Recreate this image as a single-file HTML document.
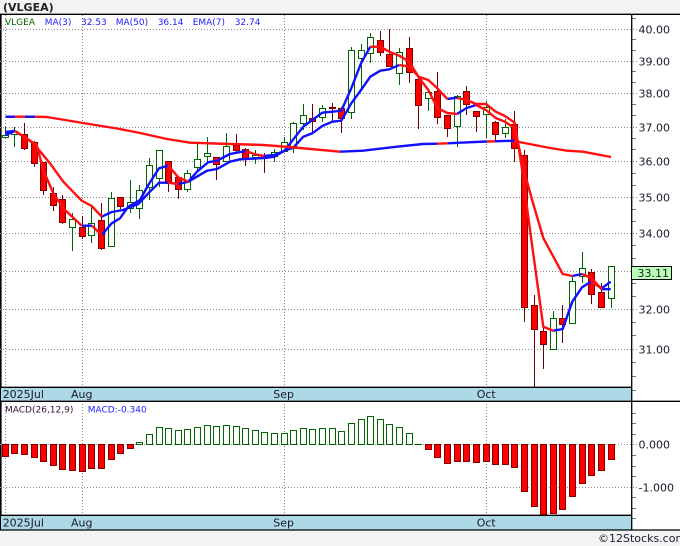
<!DOCTYPE html>
<html><head><meta charset="utf-8"><style>
html,body{margin:0;padding:0;background:#f3f3f3}
svg{display:block}
text{font-family:"DejaVu Sans",sans-serif;white-space:pre}
</style></head><body>
<svg xmlns="http://www.w3.org/2000/svg" width="680" height="546" viewBox="0 0 680 546">
<rect width="680" height="546" fill="#f3f3f3"/>
<rect x="0" y="14" width="680" height="516" fill="#fff"/>
<rect x="1" y="387" width="631" height="14" fill="#add8e6"/>
<rect x="1" y="515" width="631" height="15" fill="#add8e6"/>
<path d="M.8 14V530" stroke="#000" stroke-width="1.6" fill="none"/>
<path d="M0 29.5H637M0 61.5H637M0 93.5H637M0 127.5H637M0 161.5H637M0 197.5H637M0 233.5H637M0 271.5H637M0 309.5H637M0 349.5H637M0 444.5H637M0 487.5H637" stroke="#888" stroke-dasharray="1 2" fill="none"/>
<path d="M5.5 15V387M82.5 15V387M284.5 15V387M486.5 15V387M5.5 401V515M82.5 401V515M284.5 401V515M486.5 401V515" stroke="#888" stroke-dasharray="1 2" fill="none"/>
<path d="M632 18.5h4M632 39.5h4M632 50.5h4M632 71.5h4M632 82.5h4M632 104.5h4M632 115.5h4M632 138.5h4M632 149.5h4M632 173.5h4M632 185.5h4M632 209.5h4M632 221.5h4M632 245.5h4M632 258.5h4M632 283.5h4M632 296.5h4M632 322.5h4M632 335.5h4M632 362.5h4M632 376.5h4M632 390.5h4M632 413.5h4M632 423.5h4M632 434.5h4M632 455.5h4M632 466.5h4M632 476.5h4M632 497.5h4M632 508.5h4M632 518.5h4" stroke="#777" fill="none"/>

<!-- green wicks -->
<path fill="none" stroke="#006400" d="M5.5 127V138M14.5 127V147M72.5 213V251M91.5 207V243M111.5 192V246M130.5 180V213M139.5 185V219M149.5 158V200M159.5 150V187M187.5 170V192M197.5 144V171M207.5 137V163M226.5 133V161M255.5 150V164M274.5 149V162M284.5 137V151M293.5 122V153M303.5 104V130M322.5 105V122M351.5 47V119M361.5 44V90M370.5 33V63M399.5 48V85M428.5 92V111M457.5 95V147M486.5 101V138M505.5 119V138M553.5 311V349M572.5 277V323M582.5 252V283M611.5 266V308"/>
<!-- red wicks -->
<path fill="none" stroke="#700000" d="M24.5 123V150M34.5 141V167M43.5 162V195M53.5 187V211M62.5 195V224M82.5 216V239M101.5 203V250M120.5 197V209M168.5 161V192M178.5 177V199M216.5 157V180M236.5 134V153M245.5 148V166M264.5 153V173M312.5 104V132M332.5 103V122M341.5 107V133M380.5 31V56M389.5 29V66M409.5 37V83M418.5 77V129M437.5 72V124M447.5 115V137M466.5 86V115M476.5 111V132M495.5 121V142M514.5 111V162M524.5 150V322M534.5 295V387M543.5 327V369M562.5 305V343M591.5 269V304M601.5 283V308"/>
<!-- green bodies -->
<g fill="#fff" stroke="#006400">
<rect x="2.5" y="135.5" width="6" height="2"/><rect x="11.5" y="131.5" width="6" height="3"/><rect x="69.5" y="219.5" width="6" height="8"/><rect x="88.5" y="223.5" width="6" height="12"/><rect x="108.5" y="198.5" width="6" height="48"/><rect x="127.5" y="202.5" width="6" height="6"/><rect x="136.5" y="190.5" width="6" height="18"/><rect x="146.5" y="165.5" width="6" height="22"/><rect x="156.5" y="150.5" width="6" height="28"/><rect x="184.5" y="173.5" width="6" height="16"/><rect x="194.5" y="159.5" width="6" height="8"/><rect x="204.5" y="153.5" width="6" height="3"/><rect x="223.5" y="146.5" width="6" height="15"/><rect x="252.5" y="155.5" width="6" height="2"/><rect x="271.5" y="152.5" width="6" height="4"/><rect x="281.5" y="142.5" width="6" height="9"/><rect x="290.5" y="123.5" width="6" height="25"/><rect x="300.5" y="115.5" width="6" height="8"/><rect x="319.5" y="108.5" width="6" height="9"/><rect x="348.5" y="50.5" width="6" height="62"/><rect x="358.5" y="50.5" width="6" height="8"/><rect x="367.5" y="37.5" width="6" height="16"/><rect x="396.5" y="52.5" width="6" height="21"/><rect x="425.5" y="92.5" width="6" height="6"/><rect x="454.5" y="96.5" width="6" height="30"/><rect x="483.5" y="107.5" width="6" height="7"/><rect x="502.5" y="127.5" width="6" height="6"/><rect x="550.5" y="318.5" width="6" height="31"/><rect x="569.5" y="281.5" width="6" height="42"/><rect x="579.5" y="268.5" width="6" height="8"/><rect x="608.5" y="266.5" width="6" height="32"/>
</g>
<!-- red bodies -->
<g fill="#f00" stroke="#800000">
<rect x="21.5" y="134.5" width="6" height="14"/><rect x="31.5" y="142.5" width="6" height="21"/><rect x="40.5" y="162.5" width="6" height="28"/><rect x="50.5" y="193.5" width="6" height="12"/><rect x="59.5" y="199.5" width="6" height="23"/><rect x="79.5" y="227.5" width="6" height="9"/><rect x="98.5" y="220.5" width="6" height="28"/><rect x="117.5" y="197.5" width="6" height="9"/><rect x="165.5" y="161.5" width="6" height="22"/><rect x="175.5" y="177.5" width="6" height="12"/><rect x="213.5" y="157.5" width="6" height="7"/><rect x="233.5" y="145.5" width="6" height="5"/><rect x="242.5" y="149.5" width="6" height="9"/><rect x="261.5" y="155.5" width="6" height="2"/><rect x="309.5" y="118.5" width="6" height="3"/><rect x="329.5" y="107.5" width="6" height="1"/><rect x="338.5" y="108.5" width="6" height="10"/><rect x="377.5" y="40.5" width="6" height="12"/><rect x="386.5" y="54.5" width="6" height="12"/><rect x="406.5" y="48.5" width="6" height="24"/><rect x="415.5" y="79.5" width="6" height="26"/><rect x="434.5" y="91.5" width="6" height="26"/><rect x="444.5" y="115.5" width="6" height="13"/><rect x="463.5" y="91.5" width="6" height="13"/><rect x="473.5" y="111.5" width="6" height="5"/><rect x="492.5" y="122.5" width="6" height="12"/><rect x="511.5" y="124.5" width="6" height="24"/><rect x="521.5" y="155.5" width="6" height="152"/><rect x="531.5" y="305.5" width="6" height="24"/><rect x="540.5" y="331.5" width="6" height="13"/><rect x="559.5" y="318.5" width="6" height="6"/><rect x="588.5" y="272.5" width="6" height="22"/><rect x="598.5" y="292.5" width="6" height="15"/>
</g>

<!-- moving averages -->
<g fill="none" stroke-width="2.4" stroke-linejoin="round" stroke-linecap="butt">
<g stroke="#1010ff">
<polyline points="5.5,135 15,131"/>
<polyline points="82,225.7 92,225.7"/>
<polyline points="101.7,235 111.7,223.3 120,218.3 128.3,206.7 140,200 148.3,185 159,168.3 168.3,165.7"/>
<polyline points="188.3,181.7 197,171.7 208,162.3 217,160.7 230,154 236.7,152.7 246,151"/>
<polyline points="264.3,156 274.3,155 284.3,151 293.3,139.3 303.3,126.7 312.3,120 322.3,112.7 332.3,111.7 341.3,110.7 351.3,88.3 361,63.3 370.3,46.7"/>
<polyline points="457,114 466.7,108 476,105"/>
<polyline points="553.3,330.7 562.7,329 572.3,301.7 582,287.3 591,281.7"/>
<polyline points="601.7,288.3 610.7,281.7"/>
<polyline points="5.5,132 15,131"/>
<polyline points="101.7,216.7 111.7,212 123,210 138.3,204 148.3,193.3 159,182.7 168.3,182.7"/>
<polyline points="178.3,184 188.3,181.7 207,170.7 217,169 230,161.7 240,159.3 264.3,158 274.3,156.7 284.3,150.7 293.3,147.7 303.3,136.7 312.3,133.3 322.3,126 332.3,121.7 341.3,120.7 351.3,103.3 361,90 370.3,76.7 380.3,70.7 389.3,69.3 399.3,65"/>
<polyline points="447.3,99 457,97.7"/>
<polyline points="572.3,276 582,274"/>
<polyline points="601.7,289.3 610.7,289"/>
</g>
<g stroke="#ff0f0f">
<polyline points="15,131 24.5,137 36.7,145 43.3,170 53.3,193.3 63.3,208.3 81.7,225.7"/>
<polyline points="92,225.7 101.7,235"/>
<polyline points="168.3,165.7 178.3,177.3 188.3,181.7"/>
<polyline points="246,151 255,154.3 264.3,156"/>
<polyline points="370.3,46.7 380.3,46.7 389.3,51.7 399.3,55.7 409.3,61.7 418.7,77.3 428.3,90 437.3,108 447.3,113 457,114"/>
<polyline points="476,105 486,110 495.7,118 505,121.7 514.7,128.3 518,143 521.7,167 530,230 543.3,326.7 553.3,330.7"/>
<polyline points="591,281.7 601.7,288.3"/>
<polyline points="15,131 33.3,143.3 50,163.3 63.3,181.7 81.7,200.7 91.7,206 101.7,216.7"/>
<polyline points="168.3,182.7 178.3,184"/>
<polyline points="399.3,65 409.3,66.7 418.7,76.7 428.3,80 437.3,88.3 447.3,99"/>
<polyline points="457,98 466.7,100 476,104 486,104 495.7,111.7 505,116 514.7,122.7 518,143 524.7,173 533,203 543.3,238 562.7,274 572.3,276"/>
<polyline points="582,274 591.7,278.3 601.7,289.3"/>
</g>
<polyline stroke="#ff0f0f" points="5.5,116.7 33,116.7 47,117 83,123 117,128.5 140,133 167,139 190,142.7 230,144 263,145 289,147 340,151.7"/>
<polyline stroke="#1010ff" points="5.5,116.7 15,116.7"/>
<polyline stroke="#1010ff" points="25,116.7 35,116.7"/>
<polyline stroke="#1010ff" points="340,151.7 363,150.7 397,146.7 423,144 437,143.7"/>
<polyline stroke="#ff0f0f" points="437,143.7 448,143.3"/>
<polyline stroke="#1010ff" points="448,143.3 460,142.7 487,141.5"/>
<polyline stroke="#ff0f0f" points="487,141.5 495,141.3"/>
<polyline stroke="#1010ff" points="495,141.3 514,140.7"/>
<polyline stroke="#ff0f0f" points="514,141 550,148 567,150.7 583,151.7 611,157"/>
</g>

<!-- MACD green -->
<g fill="#fff" stroke="#006400">
<rect x="136.5" y="442.5" width="6" height="2"/><rect x="146.5" y="434.5" width="6" height="10"/><rect x="156.5" y="427.5" width="6" height="17"/><rect x="165.5" y="428.5" width="6" height="16"/><rect x="175.5" y="430.5" width="6" height="14"/><rect x="184.5" y="429.5" width="6" height="15"/><rect x="194.5" y="427.5" width="6" height="17"/><rect x="204.5" y="425.5" width="6" height="19"/><rect x="213.5" y="426.5" width="6" height="18"/><rect x="223.5" y="425.5" width="6" height="19"/><rect x="233.5" y="426.5" width="6" height="18"/><rect x="242.5" y="428.5" width="6" height="16"/><rect x="252.5" y="430.5" width="6" height="14"/><rect x="261.5" y="432.5" width="6" height="12"/><rect x="271.5" y="433.5" width="6" height="11"/><rect x="281.5" y="433.5" width="6" height="11"/><rect x="290.5" y="430.5" width="6" height="14"/><rect x="300.5" y="428.5" width="6" height="16"/><rect x="309.5" y="429.5" width="6" height="15"/><rect x="319.5" y="428.5" width="6" height="16"/><rect x="329.5" y="428.5" width="6" height="16"/><rect x="338.5" y="431.5" width="6" height="13"/><rect x="348.5" y="423.5" width="6" height="21"/><rect x="358.5" y="419.5" width="6" height="25"/><rect x="367.5" y="416.5" width="6" height="28"/><rect x="377.5" y="419.5" width="6" height="25"/><rect x="386.5" y="424.5" width="6" height="20"/><rect x="396.5" y="427.5" width="6" height="17"/><rect x="406.5" y="433.5" width="6" height="11"/>
<path d="M415 444.5h7" fill="none"/>
</g>
<!-- MACD red -->
<g fill="#f00" stroke="#800000">
<rect x="2.5" y="444.5" width="6" height="12"/><rect x="11.5" y="444.5" width="6" height="9"/><rect x="21.5" y="444.5" width="6" height="10"/><rect x="31.5" y="444.5" width="6" height="13"/><rect x="40.5" y="444.5" width="6" height="17"/><rect x="50.5" y="444.5" width="6" height="21"/><rect x="59.5" y="444.5" width="6" height="25"/><rect x="69.5" y="444.5" width="6" height="26"/><rect x="79.5" y="444.5" width="6" height="27"/><rect x="88.5" y="444.5" width="6" height="24"/><rect x="98.5" y="444.5" width="6" height="24"/><rect x="108.5" y="444.5" width="6" height="15"/><rect x="117.5" y="444.5" width="6" height="9"/><rect x="127.5" y="444.5" width="6" height="4"/>
<rect x="425.5" y="444.5" width="6" height="5"/><rect x="434.5" y="444.5" width="6" height="13"/><rect x="444.5" y="444.5" width="6" height="19"/><rect x="454.5" y="444.5" width="6" height="17"/><rect x="463.5" y="444.5" width="6" height="17"/><rect x="473.5" y="444.5" width="6" height="18"/><rect x="483.5" y="444.5" width="6" height="17"/><rect x="492.5" y="444.5" width="6" height="20"/><rect x="502.5" y="444.5" width="6" height="20"/><rect x="511.5" y="444.5" width="6" height="23"/><rect x="521.5" y="444.5" width="6" height="47"/><rect x="531.5" y="444.5" width="6" height="62"/><rect x="540.5" y="444.5" width="6" height="72"/><rect x="550.5" y="444.5" width="6" height="69"/><rect x="559.5" y="444.5" width="6" height="65"/><rect x="569.5" y="444.5" width="6" height="52"/><rect x="579.5" y="444.5" width="6" height="39"/><rect x="588.5" y="444.5" width="6" height="31"/><rect x="598.5" y="444.5" width="6" height="26"/><rect x="608.5" y="444.5" width="6" height="15"/>
</g>

<!-- bands and frame -->
<rect x="1" y="387" width="631" height="14" fill="#add8e6"/>
<rect x="1" y="515" width="631" height="15" fill="#add8e6"/>
<path d="M0 14.3H680M0 387.3H632M0 401.3H680M0 515.3H632M0 530H680" stroke="#000" stroke-width="1.3" fill="none"/>
<path d="M631.7 14V530" stroke="#000" stroke-width="1.3" fill="none"/>
<path d="M534.5 372V387" stroke="#700000" fill="none"/>

<rect x="631.5" y="266.5" width="40" height="13" fill="#b8ffb8" stroke="#000"/>
<text x="637.5" y="277" font-size="11" fill="#222">33.11</text>

<text x="3" y="11" font-size="11" font-weight="bold" fill="#222">(VLGEA)</text>
<g font-size="9">
<text x="5" y="25" fill="#006400">VLGEA</text>
<text x="44.7" y="25" fill="#2020ff">MA(3)</text>
<text x="81" y="25" fill="#2020ff">32.53</text>
<text x="115.7" y="25" fill="#2020ff">MA(50)</text>
<text x="157.7" y="25" fill="#2020ff">36.14</text>
<text x="192.7" y="25" fill="#2020ff">EMA(7)</text>
<text x="234.7" y="25" fill="#2020ff">32.74</text>
<text x="5" y="412.5" fill="#301030">MACD(26,12,9)</text>
<text x="87.7" y="412.5" fill="#2020ff">MACD:-0.340</text>
</g>
<g font-size="11" fill="#1a1a2a">
<text x="638.5" y="33.5">40.00</text>
<text x="638.5" y="65.5">39.00</text>
<text x="638.5" y="97.5">38.00</text>
<text x="638.5" y="131.5">37.00</text>
<text x="638.5" y="165.5">36.00</text>
<text x="638.5" y="201.5">35.00</text>
<text x="638.5" y="237.5">34.00</text>
<text x="638.5" y="313.5">32.00</text>
<text x="638.5" y="353.5">31.00</text>
<text x="638.5" y="448.5">0.000</text>
<text x="638.5" y="491.5">-1.000</text>
<text x="2.7" y="398">2025Jul</text>
<text x="71" y="398">Aug</text>
<text x="273.3" y="398">Sep</text>
<text x="476.7" y="398">Oct</text>
<text x="2.7" y="526.5">2025Jul</text>
<text x="71" y="526.5">Aug</text>
<text x="273.3" y="526.5">Sep</text>
<text x="476.7" y="526.5">Oct</text>
<text x="598" y="542">©12Stocks.com</text>
</g>
</svg>
</body></html>
